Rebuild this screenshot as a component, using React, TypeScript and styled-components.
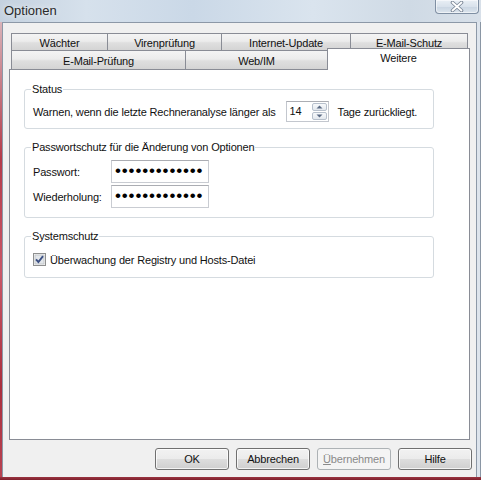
import styled, { createGlobalStyle } from 'styled-components';

const GlobalStyle = createGlobalStyle`
  html, body {
    margin: 0;
    padding: 0;
    background: #f0f0f0;
  }
  body {
    font-family: 'Liberation Sans', Arial, sans-serif;
    font-size: 11px;
    letter-spacing: -0.17px;
    color: #111;
  }
  * {
    box-sizing: border-box;
  }
`;

const Window = styled.div`
  width: 481px;
  height: 480px;
  display: flex;
  flex-direction: column;
  overflow: hidden;
  background: linear-gradient(
    to right,
    #c4d1df 0%,
    #d6e1ec 18%,
    #cad8e7 40%,
    #dae4ee 65%,
    #cfdae5 85%,
    #d8e0e9 100%
  );
`;

const TitleBar = styled.div`
  height: 22px;
  flex: none;
  display: flex;
  align-items: flex-start;
  justify-content: space-between;
  padding-left: 4px;
`;

const Title = styled.span`
  font-size: 13px;
  line-height: 21px;
  letter-spacing: 0;
  color: #2a2a2a;
  text-shadow: 0 0 6px rgba(255, 255, 255, 0.9);
`;

const CloseButton = styled.div`
  width: 44px;
  height: 14px;
  margin-right: 2px;
  display: flex;
  align-items: center;
  justify-content: center;
  border: 1px solid #7f8fa3;
  border-top: none;
  border-radius: 0 0 4px 4px;
  background: linear-gradient(#e9eff5, #d9e2ec 50%, #c9d5e2 51%, #dbe4ed);
  box-shadow: inset 0 0 0 1px rgba(255, 255, 255, 0.55);
`;

const Frame = styled.div`
  flex: 1;
  display: flex;
`;

const LeftEdge = styled.div`
  width: 2px;
  background: linear-gradient(#d9b3b9, #b33b4a 30%, #c95868 55%, #a92f3e 80%, #b84352);
`;

const RightEdge = styled.div`
  width: 4px;
  background: #dde4ec;
  border-right: 1px solid #8a96a4;
`;

const BottomEdge = styled.div`
  height: 3px;
  flex: none;
  background: linear-gradient(#9b3441, #7e1f2b);
`;

const Client = styled.div`
  flex: 1;
  display: flex;
  flex-direction: column;
  padding: 10px 0 0 6px;
  background: #f0f0f0;
  border: 1px solid #8c98a7;
  border-bottom: none;
`;

const TabStrip = styled.div`
  display: flex;
  flex-direction: column;
  margin-left: 2px;
`;

const TabRow = styled.div<{ $height: number }>`
  display: flex;
  align-items: flex-end;
  height: ${(p) => p.$height}px;
`;

const Tab = styled.div<{ $width: number; $active?: boolean }>`
  width: ${(p) => p.$width}px;
  height: 100%;
  display: flex;
  align-items: center;
  justify-content: center;
  padding-top: 2px;
  border: 1px solid #898c95;
  border-bottom: none;
  background: linear-gradient(#f4f4f4, #ececec 45%, #dfdfdf 55%, #d4d4d4);
  white-space: nowrap;
  & + & {
    margin-left: -1px;
  }
  ${(p) =>
    p.$active &&
    `
    position: relative;
    z-index: 1;
    height: 22px;
    margin-top: -2px;
    margin-bottom: -1px;
    padding-top: 0;
    padding-bottom: 4px;
    background: #fff;
  `}
`;

const Panel = styled.div`
  width: 461px;
  height: 371px;
  flex: none;
  padding: 12px 0 0 14px;
  background: #fff;
  border: 1px solid #898c95;
  display: flex;
  flex-direction: column;
  gap: 11px;
`;

const GroupBox = styled.fieldset<{ $pt: number; $pb: number }>`
  width: 410px;
  margin: 0;
  padding: ${(p) => p.$pt}px 8px ${(p) => p.$pb}px 8px;
  border: 1px solid #d5dbe0;
  border-radius: 3px;
  display: flex;
  flex-direction: column;
  gap: 2px;
`;

const Legend = styled.legend`
  padding: 0 1px;
  margin-left: -2px;
  line-height: 14px;
  font-size: 11px;
`;

const Row = styled.div<{ $height: number }>`
  display: flex;
  align-items: center;
  height: ${(p) => p.$height}px;
  white-space: nowrap;
`;

const Gap = styled.span<{ $w: number }>`
  display: inline-block;
  width: ${(p) => p.$w}px;
`;

const SpinBox = styled.div`
  width: 43px;
  height: 21px;
  display: flex;
  align-items: stretch;
  border: 1px solid #c3c7ce;
  border-top-color: #abadb3;
  background: #fff;
`;

const SpinValue = styled.span`
  flex: 1;
  padding-left: 3px;
  line-height: 19px;
`;

const SpinButtons = styled.div`
  width: 16px;
  display: flex;
  flex-direction: column;
  gap: 1px;
  padding: 1px 1px 1px 0;
`;

const SpinArrow = styled.div`
  flex: 1;
  display: flex;
  align-items: center;
  justify-content: center;
  border: 1px solid #b7c0cc;
  border-radius: 2px;
  background: linear-gradient(#f7f9fb, #e3e8ee);
`;

const FieldLabel = styled.span`
  width: 78px;
`;

const PasswordBox = styled.div`
  width: 98px;
  height: 23px;
  display: flex;
  align-items: center;
  padding: 0 0 2px 3px;
  border: 1px solid #c9ccd2;
  border-top-color: #abadb3;
  background: #fff;
  color: #000;
  font-size: 17px;
  letter-spacing: 0.85px;
  overflow: hidden;
`;

const CheckText = styled.span`
  margin-left: 4px;
`;

const ButtonBar = styled.div`
  width: 463px;
  display: flex;
  justify-content: flex-end;
  gap: 7px;
  padding-top: 8px;
`;

const Button = styled.div<{ $disabled?: boolean }>`
  width: 74px;
  height: 22px;
  display: flex;
  align-items: center;
  justify-content: center;
  border: 1px solid ${(p) => (p.$disabled ? '#adb2b5' : '#707070')};
  border-radius: 3px;
  color: ${(p) => (p.$disabled ? '#8a8a8a' : '#111')};
  background: ${(p) =>
    p.$disabled
      ? '#f4f4f4'
      : 'linear-gradient(#f2f2f2, #ebebeb 50%, #dddddd 51%, #cfcfcf)'};
  box-shadow: inset 0 0 0 1px ${(p) => (p.$disabled ? '#f4f4f4' : 'rgba(255,255,255,0.75)')};
`;

const Mnemonic = styled.span`
  text-decoration: underline;
`;

function CloseGlyph() {
  return (
    <svg width="14" height="11" viewBox="0 0 14 11">
      <path d="M2.5 1.5 L11.5 9.5 M11.5 1.5 L2.5 9.5" stroke="#7b8797" strokeWidth="3.6" strokeLinecap="round" />
      <path d="M2.5 1.5 L11.5 9.5 M11.5 1.5 L2.5 9.5" stroke="#fff" strokeWidth="1.8" strokeLinecap="round" />
    </svg>
  );
}

function Triangle({ up }: { up?: boolean }) {
  return (
    <svg width="7" height="4" viewBox="0 0 7 4">
      <path d={up ? 'M0.5 3.5 L3.5 0.5 L6.5 3.5 Z' : 'M0.5 0.5 L3.5 3.5 L6.5 0.5 Z'} fill="#5a6a84" />
    </svg>
  );
}

function CheckBox() {
  return (
    <svg width="13" height="13" viewBox="0 0 13 13">
      <rect x="0.5" y="0.5" width="12" height="12" fill="#f4f4f4" stroke="#8e8f8f" />
      <rect x="2" y="2" width="9" height="9" fill="#e2e6ea" stroke="#b2b6ba" strokeWidth="0.6" />
      <path d="M3 6.3 L5.4 9 L10 3.2" fill="none" stroke="#3d5184" strokeWidth="1.9" />
    </svg>
  );
}

export default function App() {
  const dots = '\u2022'.repeat(13);
  return (
    <>
      <GlobalStyle />
      <Window>
        <TitleBar>
          <Title>Optionen</Title>
          <CloseButton>
            <CloseGlyph />
          </CloseButton>
        </TitleBar>
        <Frame>
          <LeftEdge />
          <Client>
            <TabStrip>
              <TabRow $height={17}>
                <Tab $width={97}>Wächter</Tab>
                <Tab $width={115}>Virenprüfung</Tab>
                <Tab $width={130}>Internet-Update</Tab>
                <Tab $width={118}>E-Mail-Schutz</Tab>
              </TabRow>
              <TabRow $height={19}>
                <Tab $width={175}>E-Mail-Prüfung</Tab>
                <Tab $width={143}>Web/IM</Tab>
                <Tab $width={143} $active>
                  Weitere
                </Tab>
              </TabRow>
            </TabStrip>
            <Panel>
              <GroupBox $pt={5} $pb={6}>
                <Legend>Status</Legend>
                <Row $height={21}>
                  Warnen, wenn die letzte Rechneranalyse länger als
                  <Gap $w={10} />
                  <SpinBox>
                    <SpinValue>14</SpinValue>
                    <SpinButtons>
                      <SpinArrow>
                        <Triangle up />
                      </SpinArrow>
                      <SpinArrow>
                        <Triangle />
                      </SpinArrow>
                    </SpinButtons>
                  </SpinBox>
                  <Gap $w={9} />
                  Tage zurückliegt.
                </Row>
              </GroupBox>
              <GroupBox $pt={6} $pb={9}>
                <Legend>Passwortschutz für die Änderung von Optionen</Legend>
                <Row $height={23}>
                  <FieldLabel>Passwort:</FieldLabel>
                  <PasswordBox>{dots}</PasswordBox>
                </Row>
                <Row $height={23}>
                  <FieldLabel>Wiederholung:</FieldLabel>
                  <PasswordBox>{dots}</PasswordBox>
                </Row>
              </GroupBox>
              <GroupBox $pt={8} $pb={9}>
                <Legend>Systemschutz</Legend>
                <Row $height={17}>
                  <CheckBox />
                  <CheckText>Überwachung der Registry und Hosts-Datei</CheckText>
                </Row>
              </GroupBox>
            </Panel>
            <ButtonBar>
              <Button>OK</Button>
              <Button>Abbrechen</Button>
              <Button $disabled>
                <Mnemonic>Ü</Mnemonic>bernehmen
              </Button>
              <Button>Hilfe</Button>
            </ButtonBar>
          </Client>
          <RightEdge />
        </Frame>
        <BottomEdge />
      </Window>
    </>
  );
}
